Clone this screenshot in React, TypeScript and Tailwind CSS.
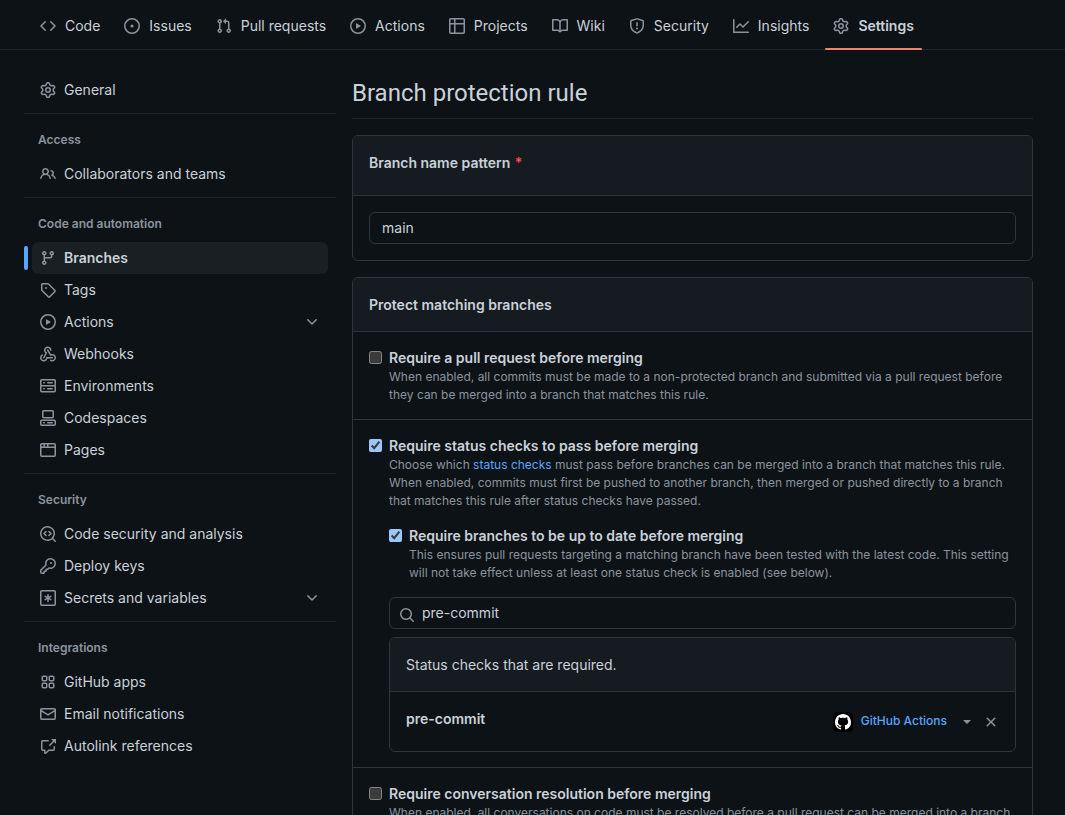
import type { ReactNode } from "react";

const CIRCLE = "M8 0a8 8 0 1 1 0 16A8 8 0 0 1 8 0ZM1.5 8a6.5 6.5 0 1 0 13 0 6.5 6.5 0 0 0-13 0Z";

const icons = {
  code: "m11.28 3.22 4.25 4.25a.75.75 0 0 1 0 1.06l-4.25 4.25a.749.749 0 0 1-1.275-.326.749.749 0 0 1 .215-.734L13.94 8l-3.72-3.72a.749.749 0 0 1 .326-1.275.749.749 0 0 1 .734.215Zm-6.56 0a.751.751 0 0 1 1.042.018.751.751 0 0 1 .018 1.042L2.06 8l3.72 3.72a.749.749 0 0 1-.326 1.275.749.749 0 0 1-.734-.215L.47 8.53a.75.75 0 0 1 0-1.06Z",
  issue: "M8 9.5a1.5 1.5 0 1 0 0-3 1.5 1.5 0 0 0 0 3Z" + CIRCLE,
  pull: "M1.5 3.25a2.25 2.25 0 1 1 3 2.122v5.256a2.251 2.251 0 1 1-1.5 0V5.372A2.25 2.25 0 0 1 1.5 3.25Zm5.677-.177L9.573.677A.25.25 0 0 1 10 .854V2.5h1A2.5 2.5 0 0 1 13.5 5v5.628a2.251 2.251 0 1 1-1.5 0V5a1 1 0 0 0-1-1h-1v1.646a.25.25 0 0 1-.427.177L7.177 3.427a.25.25 0 0 1 0-.354ZM3.75 2.5a.75.75 0 1 0 0 1.5.75.75 0 0 0 0-1.5Zm0 9.5a.75.75 0 1 0 0 1.5.75.75 0 0 0 0-1.5Zm8.25.75a.75.75 0 1 0 1.5 0 .75.75 0 0 0-1.5 0Z",
  play: CIRCLE + "m4.879-2.773 4.264 2.559a.25.25 0 0 1 0 .428l-4.264 2.559A.25.25 0 0 1 6 10.559V5.442a.25.25 0 0 1 .379-.215Z",
  table: "M0 1.75C0 .784.784 0 1.75 0h12.5C15.216 0 16 .784 16 1.75v12.5A1.75 1.75 0 0 1 14.25 16H1.75A1.75 1.75 0 0 1 0 14.25ZM6.5 6.5v8h7.75a.25.25 0 0 0 .25-.25V6.5Zm8-1.5V1.75a.25.25 0 0 0-.25-.25H6.5V5Zm-13 1.5v7.75c0 .138.112.25.25.25H5v-8ZM5 5V1.5H1.75a.25.25 0 0 0-.25.25V5Z",
  book: "M0 1.75A.75.75 0 0 1 .75 1h4.253c1.227 0 2.317.59 3 1.501A3.743 3.743 0 0 1 11.006 1h4.245a.75.75 0 0 1 .75.75v10.5a.75.75 0 0 1-.75.75h-4.507a2.25 2.25 0 0 0-1.591.659l-.622.621a.75.75 0 0 1-1.06 0l-.622-.621A2.25 2.25 0 0 0 5.258 13H.75a.75.75 0 0 1-.75-.75Zm7.251 10.324.004-5.073-.002-2.253A2.25 2.25 0 0 0 5.003 2.5H1.5v9h3.757a3.75 3.75 0 0 1 1.994.574ZM8.755 4.75l-.004 7.322a3.752 3.752 0 0 1 1.992-.572H14.5v-9h-3.495a2.25 2.25 0 0 0-2.25 2.25Z",
  shield: "M7.467.133a1.748 1.748 0 0 1 1.066 0l5.25 1.68A1.75 1.75 0 0 1 15 3.48V7c0 1.566-.32 3.182-1.303 4.682-.983 1.498-2.585 2.813-5.032 3.855a1.697 1.697 0 0 1-1.33 0c-2.447-1.042-4.049-2.357-5.032-3.855C1.32 10.182 1 8.566 1 7V3.48a1.75 1.75 0 0 1 1.217-1.667Zm.61 1.429a.25.25 0 0 0-.153 0l-5.25 1.68a.25.25 0 0 0-.174.238V7c0 1.358.275 2.666 1.057 3.86.784 1.194 2.121 2.34 4.366 3.297a.196.196 0 0 0 .154 0c2.245-.956 3.582-2.104 4.366-3.298C13.225 9.666 13.5 8.36 13.5 7V3.48a.251.251 0 0 0-.174-.237l-5.25-1.68ZM8.75 4.75v3a.75.75 0 0 1-1.5 0v-3a.75.75 0 0 1 1.5 0ZM9 10.5a1 1 0 1 1-2 0 1 1 0 0 1 2 0Z",
  graph: "M1.5 1.75V13.5h13.75a.75.75 0 0 1 0 1.5H.75a.75.75 0 0 1-.75-.75V1.75a.75.75 0 0 1 1.5 0Zm14.28 2.53-5.25 5.25a.75.75 0 0 1-1.06 0L7 7.06 4.28 9.78a.751.751 0 0 1-1.042-.018.751.751 0 0 1-.018-1.042l3.25-3.25a.75.75 0 0 1 1.06 0L10 7.94l4.72-4.72a.751.751 0 0 1 1.042.018.751.751 0 0 1 .018 1.042Z",
  gear: "M8 0a8.2 8.2 0 0 1 .701.031C9.444.095 9.99.645 10.16 1.29l.288 1.107c.018.066.079.158.212.224.231.114.454.243.668.386.123.082.233.09.299.071l1.103-.303c.644-.176 1.392.021 1.82.63.27.385.506.792.704 1.218.315.675.111 1.422-.364 1.891l-.814.806c-.049.048-.098.147-.088.294.016.257.016.515 0 .772-.01.147.038.246.088.294l.814.806c.475.469.679 1.216.364 1.891a7.977 7.977 0 0 1-.704 1.217c-.428.61-1.176.807-1.82.63l-1.102-.302c-.067-.019-.177-.011-.3.071a5.909 5.909 0 0 1-.668.386c-.133.066-.194.158-.211.224l-.29 1.106c-.168.646-.715 1.196-1.458 1.26a8.006 8.006 0 0 1-1.402 0c-.743-.064-1.289-.614-1.458-1.26l-.289-1.106c-.018-.066-.079-.158-.212-.224a5.738 5.738 0 0 1-.668-.386c-.123-.082-.233-.09-.299-.071l-1.103.303c-.644.176-1.392-.021-1.82-.63a8.12 8.12 0 0 1-.704-1.218c-.315-.675-.111-1.422.363-1.891l.815-.806c.05-.048.098-.147.088-.294a6.214 6.214 0 0 1 0-.772c.01-.147-.038-.246-.088-.294l-.815-.806C.635 6.045.431 5.298.746 4.623a7.92 7.92 0 0 1 .704-1.217c.428-.61 1.176-.807 1.82-.63l1.102.302c.067.019.177.011.3-.071.214-.143.437-.272.668-.386.133-.066.194-.158.211-.224l.29-1.106C6.009.645 6.556.095 7.299.03 7.53.01 7.764 0 8 0Zm-.571 1.525c-.036.003-.108.036-.137.146l-.289 1.105c-.147.561-.549.967-.998 1.189-.173.086-.34.183-.5.29-.417.278-.97.423-1.529.27l-1.103-.303c-.109-.03-.175.016-.195.045-.22.312-.412.644-.573.99-.014.031-.021.11.059.19l.815.806c.411.406.562.957.53 1.456a4.709 4.709 0 0 0 0 .582c.032.499-.119 1.05-.53 1.456l-.815.806c-.081.08-.073.159-.059.19.162.346.353.677.573.989.02.03.085.076.195.046l1.102-.303c.56-.153 1.113-.008 1.53.27.161.107.328.204.501.29.447.222.85.629.997 1.189l.289 1.105c.029.109.101.143.137.146a6.6 6.6 0 0 0 1.142 0c.036-.003.108-.036.137-.146l.289-1.105c.147-.561.549-.967.998-1.189.173-.086.34-.183.5-.29.417-.278.97-.423 1.529-.27l1.103.303c.109.029.175-.016.195-.045.22-.313.411-.644.573-.99.014-.031.021-.11-.059-.19l-.815-.806c-.411-.406-.562-.957-.53-1.456a4.709 4.709 0 0 0 0-.582c-.032-.499.119-1.05.53-1.456l.815-.806c.081-.08.073-.159.059-.19a6.464 6.464 0 0 0-.573-.989c-.02-.03-.085-.076-.195-.046l-1.102.303c-.56.153-1.113.008-1.53-.27a4.44 4.44 0 0 0-.501-.29c-.447-.222-.85-.629-.997-1.189l-.289-1.105c-.029-.11-.101-.143-.137-.146a6.6 6.6 0 0 0-1.142 0ZM11 8a3 3 0 1 1-6 0 3 3 0 0 1 6 0ZM9.5 8a1.5 1.5 0 1 0-3.001.001A1.5 1.5 0 0 0 9.5 8Z",
  people: "M2 5.5a3.5 3.5 0 1 1 5.898 2.549 5.508 5.508 0 0 1 3.034 4.084.75.75 0 1 1-1.482.235 4 4 0 0 0-7.9 0 .75.75 0 0 1-1.482-.236A5.507 5.507 0 0 1 3.102 8.05 3.493 3.493 0 0 1 2 5.5ZM11 4a3.001 3.001 0 0 1 2.22 5.018 5.01 5.01 0 0 1 2.56 3.012.749.749 0 0 1-.885.954.752.752 0 0 1-.549-.514 3.507 3.507 0 0 0-2.522-2.372.75.75 0 0 1-.574-.73v-.352a.75.75 0 0 1 .416-.672A1.5 1.5 0 0 0 11 5.5.75.75 0 0 1 11 4Zm-5.5-.5a2 2 0 1 0-.001 3.999A2 2 0 0 0 5.5 3.5Z",
  branch: "M9.5 3.25a2.25 2.25 0 1 1 3 2.122V6A2.5 2.5 0 0 1 10 8.5H6a1 1 0 0 0-1 1v1.128a2.251 2.251 0 1 1-1.5 0V5.372a2.25 2.25 0 1 1 1.5 0v1.836A2.493 2.493 0 0 1 6 7h4a1 1 0 0 0 1-1v-.628A2.25 2.25 0 0 1 9.5 3.25Zm-6 0a.75.75 0 1 0 1.5 0 .75.75 0 0 0-1.5 0Zm8.25-.75a.75.75 0 1 0 0 1.5.75.75 0 0 0 0-1.5ZM4.25 12a.75.75 0 1 0 0 1.5.75.75 0 0 0 0-1.5Z",
  tag: "M1 7.775V2.75C1 1.784 1.784 1 2.75 1h5.025c.464 0 .91.184 1.238.513l6.25 6.25a1.75 1.75 0 0 1 0 2.474l-5.026 5.026a1.75 1.75 0 0 1-2.474 0l-6.25-6.25A1.752 1.752 0 0 1 1 7.775Zm1.5 0c0 .066.026.13.073.177l6.25 6.25a.25.25 0 0 0 .354 0l5.025-5.025a.25.25 0 0 0 0-.354l-6.25-6.25a.25.25 0 0 0-.177-.073H2.75a.25.25 0 0 0-.25.25ZM6 5a1 1 0 1 1 0 2 1 1 0 0 1 0-2Z",
  webhook: "M5.5 4.25a2.25 2.25 0 0 1 4.5 0 .75.75 0 0 0 1.5 0 3.75 3.75 0 1 0-6.14 2.889l-2.272 4.258a.75.75 0 0 0 1.324.706L7 7.25a.75.75 0 0 0-.309-1.015A2.25 2.25 0 0 1 5.5 4.25ZM7.364 3.607a.75.75 0 0 1 1.03.257l2.608 4.349a3.75 3.75 0 1 1-.628 6.785.75.75 0 0 1 .752-1.299 2.25 2.25 0 1 0-.033-3.88.75.75 0 0 1-1.03-.256L7.107 4.636a.75.75 0 0 1 .257-1.03ZM2.9 8.776A.75.75 0 0 1 2.625 9.8 2.25 2.25 0 1 0 6 11.75a.75.75 0 0 1 .75-.751h5.5a.75.75 0 0 1 0 1.5H7.425a3.751 3.751 0 1 1-5.55-3.998.75.75 0 0 1 1.024.274Z",
  server: "M1.75 1h12.5c.966 0 1.75.784 1.75 1.75v4c0 .372-.116.717-.314 1 .198.283.314.628.314 1v4a1.75 1.75 0 0 1-1.75 1.75H1.75A1.75 1.75 0 0 1 0 12.75v-4c0-.358.109-.707.314-1a1.739 1.739 0 0 1-.314-1v-4C0 1.784.784 1 1.75 1ZM1.5 2.75v4c0 .138.112.25.25.25h12.5a.25.25 0 0 0 .25-.25v-4a.25.25 0 0 0-.25-.25H1.75a.25.25 0 0 0-.25.25Zm.25 5.75a.25.25 0 0 0-.25.25v4c0 .138.112.25.25.25h12.5a.25.25 0 0 0 .25-.25v-4a.25.25 0 0 0-.25-.25ZM7 4.75A.75.75 0 0 1 7.75 4h4.5a.75.75 0 0 1 0 1.5h-4.5A.75.75 0 0 1 7 4.75ZM7.75 10h4.5a.75.75 0 0 1 0 1.5h-4.5a.75.75 0 0 1 0-1.5ZM3 4.75A.75.75 0 0 1 3.75 4h.5a.75.75 0 0 1 0 1.5h-.5A.75.75 0 0 1 3 4.75ZM3.75 10h.5a.75.75 0 0 1 0 1.5h-.5a.75.75 0 0 1 0-1.5Z",
  codespaces: "M0 11.25c0-.966.784-1.75 1.75-1.75h12.5c.966 0 1.75.784 1.75 1.75v3A1.75 1.75 0 0 1 14.25 16H1.75A1.75 1.75 0 0 1 0 14.25Zm2-9.5C2 .784 2.784 0 3.75 0h8.5C13.216 0 14 .784 14 1.75v5a1.75 1.75 0 0 1-1.75 1.75h-8.5A1.75 1.75 0 0 1 2 6.75Zm1.75-.25a.25.25 0 0 0-.25.25v5c0 .138.112.25.25.25h8.5a.25.25 0 0 0 .25-.25v-5a.25.25 0 0 0-.25-.25Zm-2 9.5a.25.25 0 0 0-.25.25v3c0 .138.112.25.25.25h12.5a.25.25 0 0 0 .25-.25v-3a.25.25 0 0 0-.25-.25ZM7 12.75a.75.75 0 0 1 .75-.75h4.5a.75.75 0 0 1 0 1.5h-4.5a.75.75 0 0 1-.75-.75Zm-4 0a.75.75 0 0 1 .75-.75h.5a.75.75 0 0 1 0 1.5h-.5a.75.75 0 0 1-.75-.75Z",
  browser: "M0 2.75C0 1.784.784 1 1.75 1h12.5c.966 0 1.75.784 1.75 1.75v10.5A1.75 1.75 0 0 1 14.25 15H1.75A1.75 1.75 0 0 1 0 13.25ZM14.5 6h-13v7.25c0 .138.112.25.25.25h12.5a.25.25 0 0 0 .25-.25Zm-6-3.5v2h6V2.75a.25.25 0 0 0-.25-.25ZM5 2.5v2h2v-2Zm-3.25 0a.25.25 0 0 0-.25.25V4.5h2v-2Z",
  codescan: "M8.47 4.97a.75.75 0 0 0 0 1.06L9.94 7.5 8.47 8.97a.75.75 0 1 0 1.06 1.06l2-2a.75.75 0 0 0 0-1.06l-2-2a.75.75 0 0 0-1.06 0ZM6.53 6.03a.75.75 0 0 0-1.06-1.06l-2 2a.75.75 0 0 0 0 1.06l2 2a.75.75 0 1 0 1.06-1.06L5.06 7.5l1.47-1.47ZM12.246 13.307a7.501 7.501 0 1 1 1.06-1.06l2.474 2.473a.749.749 0 0 1-.326 1.275.749.749 0 0 1-.734-.215ZM1.5 7.5a6.002 6.002 0 0 0 3.608 5.504 6.002 6.002 0 0 0 6.486-1.117.748.748 0 0 1 .292-.293A6 6 0 1 0 1.5 7.5Z",
  key: "M10.5 0a5.499 5.499 0 1 1-1.288 10.848l-.932.932a.749.749 0 0 1-.53.22H7v.75a.749.749 0 0 1-.22.53l-.5.5a.749.749 0 0 1-.53.22H5v.75a.749.749 0 0 1-.22.53l-.5.5a.749.749 0 0 1-.53.22h-2A1.75 1.75 0 0 1 0 14.25v-2c0-.199.079-.389.22-.53l4.932-4.932A5.5 5.5 0 0 1 10.5 0Zm-4 5.5c-.001.431.069.86.205 1.269a.75.75 0 0 1-.181.768L1.5 12.56v1.69c0 .138.112.25.25.25h1.69l.06-.06v-1.19a.75.75 0 0 1 .75-.75h1.19l.06-.06v-1.19a.75.75 0 0 1 .75-.75h1.19l1.023-1.025a.75.75 0 0 1 .768-.18A4 4 0 1 0 6.5 5.5ZM11 6a1 1 0 1 1 0-2 1 1 0 0 1 0 2Z",
  secret: "M0 1.75C0 .784.784 0 1.75 0h12.5C15.216 0 16 .784 16 1.75v12.5A1.75 1.75 0 0 1 14.25 16H1.75A1.75 1.75 0 0 1 0 14.25Zm1.75-.25a.25.25 0 0 0-.25.25v12.5c0 .138.112.25.25.25h12.5a.25.25 0 0 0 .25-.25V1.75a.25.25 0 0 0-.25-.25ZM8 4a.75.75 0 0 1 .75.75V6.7l1.69-.975a.75.75 0 0 1 .75 1.3L9.5 8l1.69.976a.75.75 0 0 1-.75 1.298L8.75 9.3v1.951a.75.75 0 0 1-1.5 0V9.299l-1.69.976a.75.75 0 0 1-.75-1.3L6.5 8l-1.69-.975a.75.75 0 0 1 .75-1.3l1.69.976V4.75A.75.75 0 0 1 8 4Z",
  apps: "M1.5 3.25c0-.966.784-1.75 1.75-1.75h2.5c.966 0 1.75.784 1.75 1.75v2.5A1.75 1.75 0 0 1 5.75 7.5h-2.5A1.75 1.75 0 0 1 1.5 5.75Zm7 0c0-.966.784-1.75 1.75-1.75h2.5c.966 0 1.75.784 1.75 1.75v2.5a1.75 1.75 0 0 1-1.75 1.75h-2.5A1.75 1.75 0 0 1 8.5 5.75Zm-7 7c0-.966.784-1.75 1.75-1.75h2.5c.966 0 1.75.784 1.75 1.75v2.5a1.75 1.75 0 0 1-1.75 1.75h-2.5a1.75 1.75 0 0 1-1.75-1.75Zm7 0c0-.966.784-1.75 1.75-1.75h2.5c.966 0 1.75.784 1.75 1.75v2.5a1.75 1.75 0 0 1-1.75 1.75h-2.5a1.75 1.75 0 0 1-1.75-1.75ZM3.25 3a.25.25 0 0 0-.25.25v2.5c0 .138.112.25.25.25h2.5A.25.25 0 0 0 6 5.75v-2.5A.25.25 0 0 0 5.75 3Zm7 0a.25.25 0 0 0-.25.25v2.5c0 .138.112.25.25.25h2.5a.25.25 0 0 0 .25-.25v-2.5a.25.25 0 0 0-.25-.25Zm-7 7a.25.25 0 0 0-.25.25v2.5c0 .138.112.25.25.25h2.5a.25.25 0 0 0 .25-.25v-2.5a.25.25 0 0 0-.25-.25Zm7 0a.25.25 0 0 0-.25.25v2.5c0 .138.112.25.25.25h2.5a.25.25 0 0 0 .25-.25v-2.5a.25.25 0 0 0-.25-.25Z",
  mail: "M1.75 2h12.5c.966 0 1.75.784 1.75 1.75v8.5A1.75 1.75 0 0 1 14.25 14H1.75A1.75 1.75 0 0 1 0 12.25v-8.5C0 2.784.784 2 1.75 2ZM1.5 12.251c0 .138.112.25.25.25h12.5a.25.25 0 0 0 .25-.25V5.809L8.38 9.397a.75.75 0 0 1-.76 0L1.5 5.809v6.442Zm13-8.181v-.32a.25.25 0 0 0-.25-.25H1.75a.25.25 0 0 0-.25.25v.32L8 7.88Z",
  reference: "M2.75 3.5a.25.25 0 0 0-.25.25v7.5c0 .138.112.25.25.25h2a.75.75 0 0 1 .75.75v2.19l2.72-2.72a.749.749 0 0 1 .53-.22h4.5a.25.25 0 0 0 .25-.25v-2.5a.75.75 0 0 1 1.5 0v2.5A1.75 1.75 0 0 1 13.25 13H9.06l-2.573 2.573A1.458 1.458 0 0 1 4 14.543V13H2.75A1.75 1.75 0 0 1 1 11.25v-7.5C1 2.784 1.784 2 2.75 2h5.5a.75.75 0 0 1 0 1.5ZM16 1.25v4.146a.25.25 0 0 1-.427.177L14.03 4.03l-3.75 3.75a.749.749 0 0 1-1.275-.326.749.749 0 0 1 .215-.734l3.75-3.75-1.543-1.543A.25.25 0 0 1 11.604 1h4.146a.25.25 0 0 1 .25.25Z",
  chevron: "M12.78 5.22a.749.749 0 0 1 0 1.06l-4.25 4.25a.749.749 0 0 1-1.06 0L3.22 6.28a.749.749 0 1 1 1.06-1.06L8 8.939l3.72-3.719a.749.749 0 0 1 1.06 0Z",
  search: "M10.68 11.74a6 6 0 0 1-7.922-8.982 6 6 0 0 1 8.982 7.922l3.04 3.04a.749.749 0 0 1-.326 1.275.749.749 0 0 1-.734-.215ZM11.5 7a4.499 4.499 0 1 0-8.997 0A4.499 4.499 0 0 0 11.5 7Z",
  close: "M3.72 3.72a.75.75 0 0 1 1.06 0L8 6.94l3.22-3.22a.749.749 0 0 1 1.275.326.749.749 0 0 1-.215.734L9.06 8l3.22 3.22a.749.749 0 0 1-.326 1.275.749.749 0 0 1-.734-.215L8 9.06l-3.22 3.22a.751.751 0 0 1-1.042-.018.751.751 0 0 1-.018-1.042L6.94 8 3.72 4.78a.75.75 0 0 1 0-1.06Z",
  caret: "M4 6h8L8 10Z",
  github: "M8 0c4.42 0 8 3.58 8 8a8.013 8.013 0 0 1-5.45 7.59c-.4.08-.55-.17-.55-.38 0-.27.01-1.13.01-2.2 0-.75-.25-1.23-.54-1.48 1.78-.2 3.65-.88 3.65-3.95 0-.88-.31-1.59-.82-2.15.08-.2.36-1.02-.08-2.12 0 0-.67-.22-2.2.82-.64-.18-1.32-.27-2-.27-.68 0-1.36.09-2 .27-1.53-1.03-2.2-.82-2.2-.82-.44 1.1-.16 1.92-.08 2.12-.51.56-.82 1.28-.82 2.15 0 3.06 1.86 3.75 3.64 3.95-.23.2-.44.55-.51 1.07-.46.21-1.61.55-2.33-.66-.15-.24-.6-.83-1.23-.82-.67.01-.27.38.01.53.34.19.73.9.82 1.13.16.45.68 1.31 2.69.94 0 .67.01 1.3.01 1.49 0 .21-.15.45-.55.38A7.995 7.995 0 0 1 0 8c0-4.42 3.58-8 8-8Z",
};

type IconName = keyof typeof icons;

function Icon({ name, className = "text-[#8b949e]" }: { name: IconName; className?: string }) {
  return (
    <svg viewBox="0 0 16 16" fill="currentColor" aria-hidden="true" className={`size-4 shrink-0 ${className}`}>
      <path d={icons[name]} />
    </svg>
  );
}

const tabs: { label: string; icon: IconName }[] = [
  { label: "Code", icon: "code" },
  { label: "Issues", icon: "issue" },
  { label: "Pull requests", icon: "pull" },
  { label: "Actions", icon: "play" },
  { label: "Projects", icon: "table" },
  { label: "Wiki", icon: "book" },
  { label: "Security", icon: "shield" },
  { label: "Insights", icon: "graph" },
  { label: "Settings", icon: "gear" },
];

type NavEntry = { label: string; icon: IconName; expandable?: boolean };

const groups: { title: string; items: NavEntry[] }[] = [
  { title: "Access", items: [{ label: "Collaborators and teams", icon: "people" }] },
  {
    title: "Code and automation",
    items: [
      { label: "Branches", icon: "branch" },
      { label: "Tags", icon: "tag" },
      { label: "Actions", icon: "play", expandable: true },
      { label: "Webhooks", icon: "webhook" },
      { label: "Environments", icon: "server" },
      { label: "Codespaces", icon: "codespaces" },
      { label: "Pages", icon: "browser" },
    ],
  },
  {
    title: "Security",
    items: [
      { label: "Code security and analysis", icon: "codescan" },
      { label: "Deploy keys", icon: "key" },
      { label: "Secrets and variables", icon: "secret", expandable: true },
    ],
  },
  {
    title: "Integrations",
    items: [
      { label: "GitHub apps", icon: "apps" },
      { label: "Email notifications", icon: "mail" },
      { label: "Autolink references", icon: "reference" },
    ],
  },
];

function NavItem({ label, icon, expandable }: NavEntry) {
  const active = label === "Branches";
  const row = "flex h-8 w-full items-center gap-2 rounded-md px-2 text-left";
  return (
    <li className="relative px-2">
      {active && <span className="absolute top-1 left-0 h-6 w-1 rounded-md bg-[#58a6ff]" />}
      {expandable ? (
        <button type="button" className={row}>
          <Icon name={icon} />
          <span className="flex-1">{label}</span>
          <Icon name="chevron" />
        </button>
      ) : (
        <a href="#" aria-current={active ? "page" : undefined} className={`${row} ${active ? "bg-[#1a1f24] font-semibold" : ""}`}>
          <Icon name={icon} />
          {label}
        </a>
      )}
    </li>
  );
}

function CheckOption({ id, title, checked, children }: { id: string; title: string; checked?: boolean; children: ReactNode }) {
  return (
    <div className="flex items-start gap-[7px]">
      <input id={id} type="checkbox" defaultChecked={checked} className="mt-[3px] size-[13px] shrink-0 scheme-dark" />
      <div className="min-w-0 flex-1">
        <label htmlFor={id} className="block font-semibold">{title}</label>
        {children}
      </div>
    </div>
  );
}

function Note({ children }: { children: ReactNode }) {
  return <p className="text-xs leading-[18px] text-[#8b949e]">{children}</p>;
}

export default function App() {
  return (
    <div className="min-h-screen bg-[#0d1216] font-['Inter',sans-serif] text-sm text-[#c9d1d9]">
      <nav aria-label="Repository" className="border-b border-[#21262d] px-8">
        <ul className="flex gap-2">
          {tabs.map((tab) => {
            const active = tab.label === "Settings";
            return (
              <li key={tab.label} className="relative">
                <a href="#" aria-current={active ? "page" : undefined} className={`flex h-[49px] items-center gap-[9px] px-2 pt-[3px] whitespace-nowrap ${active ? "font-semibold" : ""}`}>
                  <Icon name={tab.icon} />
                  {tab.label}
                </a>
                {active && <span className="absolute inset-x-0 -bottom-px h-0.5 rounded-md bg-[#f78166]" />}
              </li>
            );
          })}
        </ul>
      </nav>

      <div className="flex gap-4 pt-6 pr-8 pl-6">
        <nav aria-label="Settings" className="w-[312px] shrink-0">
          <ul>
            <NavItem label="General" icon="gear" />
          </ul>
          {groups.map((group) => (
            <section key={group.title} className="mt-[7px] border-t border-[#21262d]">
              <h2 className="px-3.5 pt-4 pb-2 text-xs leading-5 font-semibold text-[#8b949e]">{group.title}</h2>
              <ul>
                {group.items.map((item) => (
                  <NavItem key={item.label} {...item} />
                ))}
              </ul>
            </section>
          ))}
        </nav>

        <main className="min-w-0 flex-1">
          <h1 className="border-b border-[#21262d] pt-px pb-[7px] font-['Roboto',sans-serif] text-2xl leading-9">Branch protection rule</h1>

          <section className="mt-4 overflow-hidden rounded-md border border-[#30363b]">
            <div className="border-b border-[#30363b] bg-[#161b22] px-4 pt-4 pb-[22px] leading-[21px]">
              <label htmlFor="pattern" className="block font-semibold">
                Branch name pattern <span className="pl-px text-[#f85149]">*</span>
              </label>
            </div>
            <div className="p-4">
              <input id="pattern" type="text" defaultValue="main" className="block h-8 w-full rounded-md border border-[#30363b] bg-transparent px-3 pb-0.5 leading-5 outline-none" />
            </div>
          </section>

          <section className="mt-4 overflow-hidden rounded-md border border-[#30363b]">
            <h2 className="border-b border-[#30363b] bg-[#161b22] p-4 leading-[21px] font-semibold">Protect matching branches</h2>

            <div className="divide-y divide-[#30363b] *:px-4 *:pt-4 *:pb-[15px]">
              <div>
                <CheckOption id="require-pr" title="Require a pull request before merging">
                  <Note>
                    When enabled, all commits must be made to a non-protected branch and submitted via a pull request before they can be merged into a branch that matches this rule.
                  </Note>
                </CheckOption>
              </div>

              <div>
                <CheckOption id="require-checks" title="Require status checks to pass before merging" checked>
                  <Note>
                    Choose which <a href="#" className="text-[#58a6ff]">status checks</a> must pass before branches can be merged into a branch that matches this rule. When enabled, commits must first be pushed to another branch, then merged or pushed directly to a branch that matches this rule after status checks have passed.
                  </Note>
                  <div className="mt-4">
                    <CheckOption id="require-updated" title="Require branches to be up to date before merging" checked>
                      <Note>
                        This ensures pull requests targeting a matching branch have been tested with the latest code. This setting will not take effect unless at least one status check is enabled (see below).
                      </Note>
                    </CheckOption>
                  </div>

                  <div className="mt-[15px] flex h-8 items-center gap-[7px] rounded-md border border-[#30363b] px-2">
                    <Icon name="search" className="mt-1 ml-px text-[#8b949e]" />
                    <input type="text" aria-label="Search for status checks" defaultValue="pre-commit" className="min-w-0 flex-1 bg-transparent outline-none" />
                  </div>

                  <div className="mt-2 overflow-hidden rounded-md border border-[#30363b]">
                    <div className="border-b border-[#30363b] bg-[#161b22] p-4 leading-[21px]">Status checks that are required.</div>
                    <div className="flex h-[59px] items-center justify-between px-4">
                      <strong className="pb-1.5 font-semibold">pre-commit</strong>
                      <div className="flex items-center">
                        <span className="mr-2 flex size-5 items-center justify-center rounded-sm bg-black">
                          <Icon name="github" className="text-white" />
                        </span>
                        <button type="button" className="flex items-center text-xs font-medium text-[#58a6ff]">
                          <span className="pb-0.5">GitHub Actions</span>
                          <Icon name="caret" className="ml-3 text-[#8b949e]" />
                        </button>
                        <button type="button" aria-label="Remove pre-commit" className="ml-2">
                          <Icon name="close" />
                        </button>
                      </div>
                    </div>
                  </div>
                </CheckOption>
              </div>

              <div>
                <CheckOption id="require-resolution" title="Require conversation resolution before merging">
                  <Note>
                    When enabled, all conversations on code must be resolved before a pull request can be merged into a branch that matches this rule.
                  </Note>
                </CheckOption>
              </div>
            </div>
          </section>
        </main>
      </div>
    </div>
  );
}
